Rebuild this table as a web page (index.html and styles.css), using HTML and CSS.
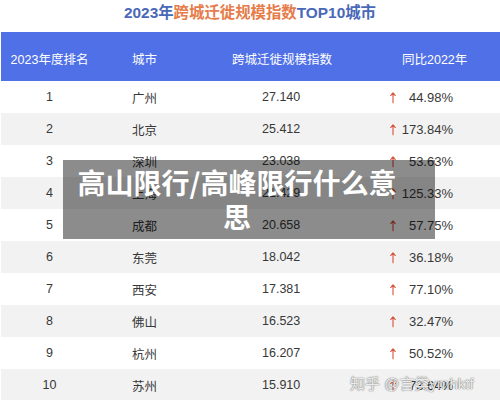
FILE: index.html
```html
<!DOCTYPE html>
<html lang="zh">
<head>
<meta charset="utf-8">
<link rel="stylesheet" href="styles.css">
</head>
<body>
<div class="page">
  <h1 class="title">2023年<span class="hl">跨城迁徙规模指数</span>TOP10城市</h1>
  <div class="table">
    <div class="thead">
      <div class="h-rank">2023年度排名</div>
      <div class="h-city">城市</div>
      <div class="h-idx">跨城迁徙规模指数</div>
      <div class="h-pct">同比2022年</div>
    </div>
    <div class="row"><div class="rank">1</div><div class="city">广州</div><div class="idx">27.140</div><div class="arrow"><svg viewBox="0 0 7 13"><path d="M3.5 12.5V1M0.8 4.2L3.5 1L6.2 4.2"/></svg></div><div class="pct">44.98%</div></div>
    <div class="row alt"><div class="rank">2</div><div class="city">北京</div><div class="idx">25.412</div><div class="arrow"><svg viewBox="0 0 7 13"><path d="M3.5 12.5V1M0.8 4.2L3.5 1L6.2 4.2"/></svg></div><div class="pct">173.84%</div></div>
    <div class="row"><div class="rank">3</div><div class="city">深圳</div><div class="idx">23.038</div><div class="arrow"><svg viewBox="0 0 7 13"><path d="M3.5 12.5V1M0.8 4.2L3.5 1L6.2 4.2"/></svg></div><div class="pct">53.63%</div></div>
    <div class="row alt"><div class="rank">4</div><div class="city">上海</div><div class="idx">21.429</div><div class="arrow"><svg viewBox="0 0 7 13"><path d="M3.5 12.5V1M0.8 4.2L3.5 1L6.2 4.2"/></svg></div><div class="pct">125.33%</div></div>
    <div class="row"><div class="rank">5</div><div class="city">成都</div><div class="idx">20.658</div><div class="arrow"><svg viewBox="0 0 7 13"><path d="M3.5 12.5V1M0.8 4.2L3.5 1L6.2 4.2"/></svg></div><div class="pct">57.75%</div></div>
    <div class="row alt"><div class="rank">6</div><div class="city">东莞</div><div class="idx">18.042</div><div class="arrow"><svg viewBox="0 0 7 13"><path d="M3.5 12.5V1M0.8 4.2L3.5 1L6.2 4.2"/></svg></div><div class="pct">36.18%</div></div>
    <div class="row"><div class="rank">7</div><div class="city">西安</div><div class="idx">17.381</div><div class="arrow"><svg viewBox="0 0 7 13"><path d="M3.5 12.5V1M0.8 4.2L3.5 1L6.2 4.2"/></svg></div><div class="pct">77.10%</div></div>
    <div class="row alt"><div class="rank">8</div><div class="city">佛山</div><div class="idx">16.523</div><div class="arrow"><svg viewBox="0 0 7 13"><path d="M3.5 12.5V1M0.8 4.2L3.5 1L6.2 4.2"/></svg></div><div class="pct">32.47%</div></div>
    <div class="row"><div class="rank">9</div><div class="city">杭州</div><div class="idx">16.207</div><div class="arrow"><svg viewBox="0 0 7 13"><path d="M3.5 12.5V1M0.8 4.2L3.5 1L6.2 4.2"/></svg></div><div class="pct">50.52%</div></div>
    <div class="row alt"><div class="rank">10</div><div class="city">苏州</div><div class="idx">15.910</div><div class="arrow"><svg viewBox="0 0 7 13"><path d="M3.5 12.5V1M0.8 4.2L3.5 1L6.2 4.2"/></svg></div><div class="pct">73.64%</div></div>
  </div>
  <div class="overlay">高山限行/高峰限行什么意思</div>
  <div class="watermark">知乎 @言类ymhktf</div>
</div>
</body>
</html>
```
FILE: styles.css
```css
html, body {
  margin: 0;
  padding: 0;
  background: #ffffff;
}
body {
  font-family: "Liberation Sans", "Noto Sans CJK SC", sans-serif;
  color: #333333;
  overflow: hidden;
}
.page {
  position: relative;
  width: 500px;
  height: 400px;
  overflow: hidden;
}
.title {
  margin: 0;
  height: 32px;
  line-height: 25px;
  font-size: 15.4px;
  font-weight: bold;
  text-align: center;
  color: #4a68b8;
}
.title .hl {
  color: #e57c4a;
}
.table {
  padding-left: 1px;
}
.thead {
  display: grid;
  grid-template-columns: 97px 134px 170px 1fr;
  height: 49px;
  box-sizing: border-box;
  padding-top: 7px;
  line-height: 42px;
  background: #4f70e6;
  color: #ffffff;
  font-size: 12.5px;
}
.h-rank { text-align: center; }
.h-city { padding-left: 34px; }
.h-pct { padding-left: 0; }
.row {
  display: grid;
  grid-template-columns: 97px 164px 128px 6px 57px;
  height: 32px;
  align-items: center;
  font-size: 12.5px;
  color: #383838;
}
.row.alt {
  background: #f2f2f2;
}
.rank { text-align: center; }
.city { padding-left: 34px; }
.pct {
  text-align: right;
  font-size: 13px;
}
.arrow {
  display: flex;
  align-items: center;
}
.arrow svg {
  width: 7px;
  height: 13px;
  fill: none;
  stroke: #d4553d;
  stroke-width: 1.3;
  stroke-linecap: round;
  stroke-linejoin: round;
}
.overlay {
  position: absolute;
  left: 63px;
  top: 160px;
  width: 320px;
  height: 67px;
  padding: 6px 38px 6px 14px;
  background: rgba(0, 0, 0, 0.45);
  color: #ffffff;
  font-family: "Noto Sans CJK SC", sans-serif;
  font-weight: bold;
  font-size: 28px;
  line-height: 33.5px;
  text-align: center;
}
.watermark {
  position: absolute;
  left: 350px;
  top: 374px;
  font-size: 15px;
  line-height: 20px;
  color: rgba(255, 255, 255, 0.9);
  text-shadow: 0 0 1px rgba(0, 0, 0, 0.6), 0 0 2px rgba(0, 0, 0, 0.3);
  white-space: nowrap;
}
```
